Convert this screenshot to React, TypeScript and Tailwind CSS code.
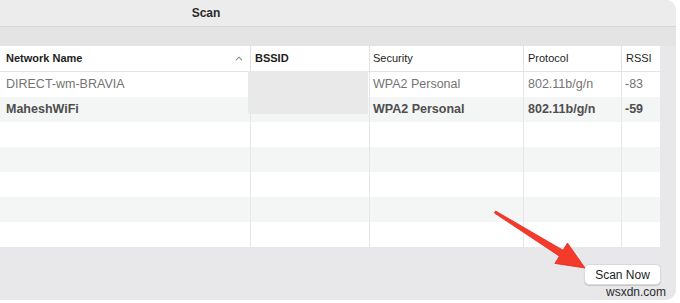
import React from 'react';

const cols = ['w-[250px]', 'w-[119px]', 'w-[154px]', 'w-[98px]', 'w-[39px]'];

const rows = [
  { name: 'DIRECT-wm-BRAVIA', bssid: '', security: 'WPA2 Personal', protocol: '802.11b/g/n', rssi: '-83', bold: false },
  { name: 'MaheshWiFi', bssid: '', security: 'WPA2 Personal', protocol: '802.11b/g/n', rssi: '-59', bold: true },
  null,
  null,
  null,
  null,
  null,
];

const App: React.FC = () => {
  return (
    <div className="relative w-[680px] h-[303px] bg-white overflow-hidden font-['Liberation_Sans',Arial,sans-serif]">
      <div className="w-[676px] h-[300px] bg-[#e8e8ea] rounded-r-[10px] overflow-hidden flex flex-col">
        {/* title bar */}
        <div className="h-[27px] bg-[#ececec] border-b border-[#d7d7d7] flex">
          <div className="w-[412px] flex items-center justify-center text-[12px] font-bold text-[#2a2a2a]">Scan</div>
        </div>
        <div className="h-[19px] bg-[#e4e4e5]" />

        {/* table */}
        <div className="w-[660px] bg-white">
          <div className="flex h-[26px] border-b border-[#e4e4e4] text-[11px] font-bold text-[#1e1e1e]">
            <div className={`${cols[0]} flex items-center justify-between pl-[6px] pr-[6px]`}>
              <span>Network Name</span>
              <svg width="8" height="5" viewBox="0 0 8 5" className="mr-[1px]">
                <path d="M1 4.2 L4 1.2 L7 4.2" fill="none" stroke="#8a8a8a" strokeWidth="1.1" />
              </svg>
            </div>
            <div className={`${cols[1]} flex items-center pl-[4px] border-l border-[#e2e2e2]`}>BSSID</div>
            <div className={`${cols[2]} flex items-center pl-[3px] border-l border-[#e2e2e2] font-normal`}>Security</div>
            <div className={`${cols[3]} flex items-center pl-[4px] border-l border-[#e2e2e2] font-normal`}>Protocol</div>
            <div className={`${cols[4]} flex items-center pl-[4px] border-l border-[#e2e2e2] font-normal`}>RSSI</div>
          </div>
          {rows.map((r, i) => (
            <div
              key={i}
              className={`flex h-[25px] text-[12.5px] ${i % 2 === 1 ? 'bg-[#f4f5f5]' : 'bg-white'} ${r?.bold ? 'font-bold text-[#4e4e4e]' : 'text-[#747474]'}`}
            >
              <div className={`${cols[0]} flex items-center pl-[6px]`}>{r?.name}</div>
              <div className={`${cols[1]} flex items-center pl-[4px] border-l border-[#e6e6e6]`}>{r?.bssid}</div>
              <div className={`${cols[2]} flex items-center pl-[3px] border-l border-[#e6e6e6]`}>{r?.security}</div>
              <div className={`${cols[3]} flex items-center pl-[4px] border-l border-[#e6e6e6]`}>{r?.protocol}</div>
              <div className={`${cols[4]} flex items-center pl-[3px] border-l border-[#e6e6e6]`}>{r?.rssi}</div>
            </div>
          ))}
        </div>

        <div className="flex-1 flex justify-end items-start pt-[17px] pr-[15px]">
          <button className="w-[77px] h-[21px] bg-white rounded-[5px] border border-[#d9d9d9] shadow-[0_1px_1px_rgba(0,0,0,0.15)] text-[12px] text-[#1e1e1e] flex items-center justify-center">
            Scan Now
          </button>
        </div>
      </div>

      {/* redacted BSSID */}
      <div className="absolute left-[248px] top-[71px] w-[120px] h-[43px] bg-[#e9e9e9]" />

      {/* watermark */}
      <div className="absolute left-[606px] top-[285px] text-[12px] text-[#2a2a2a] leading-[14px]">wsxdn.com</div>

      {/* arrow */}
      <svg className="absolute inset-0 pointer-events-none" width="680" height="303" viewBox="0 0 680 303">
        <polygon
          points="495.6,211 563,250.2 567.5,243 585,268 554.9,263.4 559.4,256.2 494.4,213"
          fill="#f43a2b"
          stroke="#e02a1e"
          strokeWidth="0.8"
          strokeLinejoin="round"
        />
      </svg>
    </div>
  );
};

export default App;
